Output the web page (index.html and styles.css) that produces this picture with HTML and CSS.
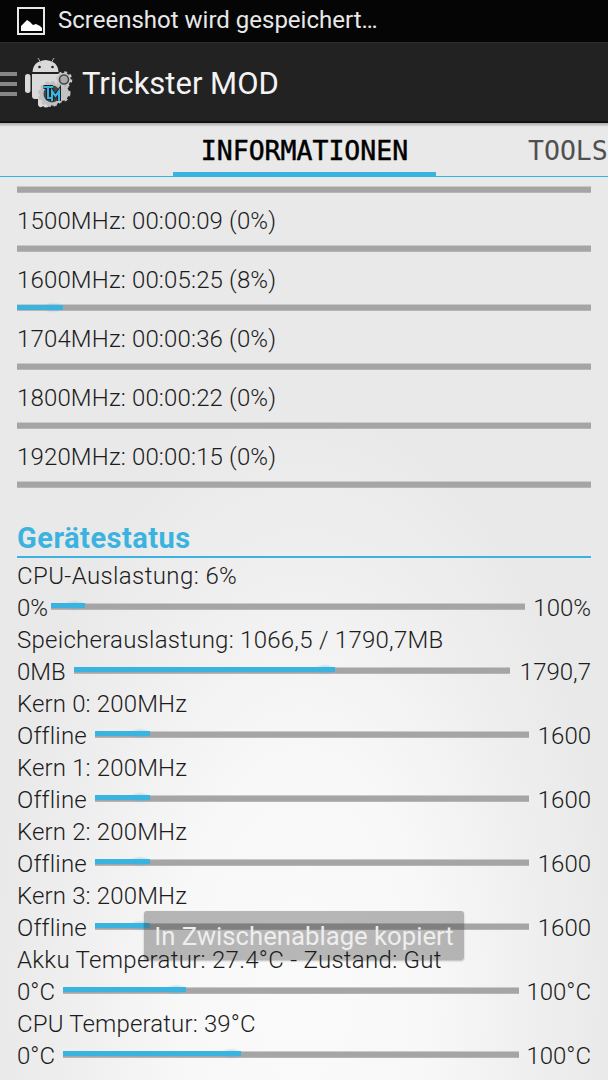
FILE: index.html
```
<!DOCTYPE html>
<html lang="de">
<head>
<meta charset="utf-8">
<title>Trickster MOD</title>
<link rel="stylesheet" href="styles.css">
</head>
<body>
<div class="status-bar">
  <svg class="picture-icon" viewBox="0 0 28 28"><rect x="1" y="1" width="26" height="26" fill="none" stroke="#e8e8e8" stroke-width="2"/><path d="M4 24v-5l5-5 1-1 3 2 3 3 3-1 4 2 2 2v3z" fill="#fff"/></svg>
  <span class="status-text">Screenshot wird gespeichert…</span>
</div>
<header class="action-bar">
  <div class="drawer"><i></i><i></i><i></i></div>
  <svg class="logo" viewBox="0 0 50 52">
    <g fill="#dadada">
      <path d="M7.500 15Q8 4 20.500 3Q33 4 33.500 15z"/>
      <path d="M13 1l3 5M29 1l-3 5" stroke="#b5b5b5" stroke-width="1"/>
      <path d="M7 17h27v22q0 3-3 3h-7v7q-3 3-6 0-3 3-5-1v-6h-3q-3 0-3-3z"/>
      <rect x="0" y="17" width="5.500" height="19" rx="2.700"/>
    </g>
    <circle cx="14.500" cy="10" r="1.300" fill="#222"/><circle cx="27.500" cy="10" r="1.300" fill="#222"/>
    <circle cx="36" cy="36" r="8" fill="#c4c4c4" stroke="#c4c4c4" stroke-width="3" stroke-dasharray="3 3"/>
    <circle cx="39" cy="22.500" r="6.800" fill="#bcbcbc" stroke="#c8c8c8" stroke-width="3" stroke-dasharray="2.700 2.640"/>
    <circle cx="39" cy="22.500" r="4.500" fill="#aaa" stroke="#444" stroke-width="1.500"/>
    <circle cx="26" cy="37" r="11.500" fill="#c1c1c1" stroke="#c1c1c1" stroke-width="3" stroke-dasharray="3.500 2.520"/>
    <circle cx="27" cy="37" r="8.500" fill="#444"/>
    <path d="M18.500 30H28M23 30v11h3M27 44V34l3.500 5 3.500-5v10" fill="none" stroke="#222" stroke-width="4"/>
    <path d="M18.500 30H28M23 30v11h3M27 44V34l3.500 5 3.500-5v10" fill="none" stroke="#35b5e5" stroke-width="2"/>
  </svg>
  <h1 class="title">Trickster MOD</h1>
</header>
<nav class="tabs">
  <div class="tab tab-active">INFORMATIONEN</div>
  <div class="tab tab-next">TOOLS</div>
</nav>
<main class="content">
  <section class="frequencies">
    <div class="bar"></div>
    <div class="freq">1500MHz: 00:00:09 (0%)</div><div class="bar"></div>
    <div class="freq">1600MHz: 00:05:25 (8%)</div><div class="bar"><div class="fill" style="width:8.100%"></div></div>
    <div class="freq">1704MHz: 00:00:36 (0%)</div><div class="bar"></div>
    <div class="freq">1800MHz: 00:00:22 (0%)</div><div class="bar"></div>
    <div class="freq">1920MHz: 00:00:15 (0%)</div><div class="bar"></div>
  </section>
  <section>
    <h2 class="heading">Gerätestatus</h2>
    <div class="line line-load">CPU-Auslastung: 6%</div>
    <div class="gauge gauge-percent"><span>0%</span><div class="bar"><div class="fill" style="width:7.100%"></div></div><span>100%</span></div>
    <div class="line">Speicherauslastung: 1066,5 / 1790,7MB</div>
    <div class="gauge gauge-memory"><span>0MB</span><div class="bar"><div class="fill" style="width:59.800%"></div></div><span>1790,7</span></div>
    <div class="line line-core">Kern 0: 200MHz</div>
    <div class="gauge gauge-core"><span>Offline</span><div class="bar"><div class="fill" style="width:12.600%"></div></div><span>1600</span></div>
    <div class="line line-core">Kern 1: 200MHz</div>
    <div class="gauge gauge-core"><span>Offline</span><div class="bar"><div class="fill" style="width:12.600%"></div></div><span>1600</span></div>
    <div class="line line-core">Kern 2: 200MHz</div>
    <div class="gauge gauge-core"><span>Offline</span><div class="bar"><div class="fill" style="width:12.600%"></div></div><span>1600</span></div>
    <div class="line line-core">Kern 3: 200MHz</div>
    <div class="gauge gauge-core"><span>Offline</span><div class="bar"><div class="fill" style="width:12.600%"></div></div><span>1600</span></div>
    <div class="line line-front">Akku Temperatur: 27.4°C - Zustand: Gut</div>
    <div class="gauge gauge-temp"><span>0°C</span><div class="bar"><div class="fill" style="width:27%"></div></div><span>100°C</span></div>
    <div class="line line-core">CPU Temperatur: 39°C</div>
    <div class="gauge gauge-temp"><span>0°C</span><div class="bar"><div class="fill" style="width:39%"></div></div><span>100°C</span></div>
  </section>
</main>
<div class="toast">In Zwischenablage kopiert</div>
</body>
</html>
```
FILE: styles.css
```
* { box-sizing: border-box; }
body {
  margin: 0;
  width: 608px;
  height: 1080px;
  overflow: hidden;
  position: relative;
  font-family: Roboto, sans-serif;
  font-weight: 300;
  font-size: 24px;
  color: #1c1c1c;
  background: radial-gradient(ellipse 310px 580px at 304px 990px, #fafafa 0, #f8f8f8 40%, #f0f0f0 70%, #e9e9e9 100%);
}
.status-bar {
  height: 42px;
  background: #050505;
  display: flex;
  align-items: center;
  padding-left: 17px;
  gap: 13px;
  color: #e8e8e8;
  font-weight: 400;
}
.picture-icon { width: 28px; height: 28px; }
.status-text { white-space: nowrap; line-height: 40px; height: 42px; }
.action-bar {
  height: 81px;
  background: #222;
  border-top: 1px solid #2c2c2c;
  border-bottom: 2px solid #111;
  display: flex;
  align-items: center;
  color: #f3f3f3;
}
.drawer { width: 17px; display: grid; gap: 6px; padding-top: 4px; }
.drawer i { height: 4px; background: #868686; }
.logo { width: 50px; height: 52px; margin: 2px 0 0 8px; }
.title { margin: 3px 0 0 7px; font-size: 31px; font-weight: 400; white-space: nowrap; }
.tabs {
  height: 54px;
  display: flex;
  border-bottom: 1px solid #33b5e5;
  background: linear-gradient(#aaa, transparent 4px);
  padding-left: 173px;
  font-family: "DejaVu Sans Mono", monospace;
  font-size: 26.500px;
  font-weight: 400;
}
.tab { line-height: 55px; height: 53px; white-space: nowrap; flex: none; }
.tab-active {
  width: 263px;
  text-align: center;
  color: #000;
  -webkit-text-stroke: .5px #000;
  border-bottom: 4px solid #3bb3e0;
}
.tab-next { margin-left: 92px; color: #505050; }
.content { padding: 9px 17px 0; }
.bar {
  height: 7px;
  background: #a5a5a5;
  border-top: 1px solid #c9c9c9;
  border-bottom: 1px solid #b5b5b5;
}
.fill { height: 5px; background: #3bb3e0; position: relative; }
.fill::after {
  content: "";
  position: absolute;
  right: -1px;
  top: -3px;
  width: 22px;
  height: 11px;
  background: radial-gradient(closest-side, rgba(59, 179, 224, .5), transparent);
}
.freq { height: 52px; line-height: 57px; white-space: nowrap; letter-spacing: .150px; }
.heading {
  margin: 32px 0 2px;
  height: 38px;
  line-height: 36px;
  font-size: 29px;
  font-weight: 700;
  letter-spacing: .500px;
  color: #3bb3e0;
  border-bottom: 2px solid #3bb3e0;
}
.line { height: 32px; line-height: 32px; white-space: nowrap; letter-spacing: .260px; }
.line-load { letter-spacing: .400px; }
.line-core { letter-spacing: .150px; }
.line-front { position: relative; z-index: 2; letter-spacing: .290px; }
.gauge { height: 32px; line-height: 32px; display: flex; justify-content: space-between; white-space: nowrap; }
.gauge .bar { flex: 1; margin-top: 11px; }
.gauge .fill { margin-top: -1px; }
.gauge span:last-child { text-align: right; }
.gauge-percent span:first-child { width: 34px; }
.gauge-percent span:last-child { width: 66px; }
.gauge-memory span:first-child { width: 57px; }
.gauge-memory span:last-child { width: 81px; }
.gauge-core span:first-child { width: 78px; letter-spacing: .200px; }
.gauge-core span:last-child { width: 62px; }
.gauge-temp span:first-child { width: 46px; }
.gauge-temp span:last-child { width: 72px; }
.toast {
  position: absolute;
  left: 144px;
  top: 911px;
  width: 320px;
  height: 49px;
  line-height: 50px;
  text-align: center;
  white-space: nowrap;
  font-weight: 400;
  font-size: 25.700px;
  color: #eee;
  background: rgba(65, 65, 65, .36);
  border-radius: 3px;
  box-shadow: 0 1px 2px rgba(0, 0, 0, .25);
  z-index: 1;
}
```
